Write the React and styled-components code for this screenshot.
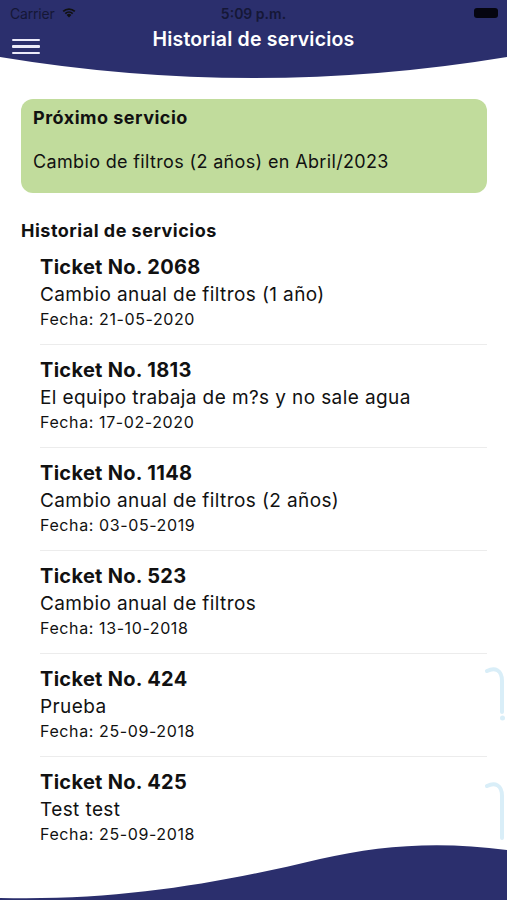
import React from 'react';
import styled, { createGlobalStyle } from 'styled-components';

const NAVY = '#2b2f6d';

const tickets = [
  { no: 2068, text: 'Cambio anual de filtros (1 año)', date: '21-05-2020' },
  { no: 1813, text: 'El equipo trabaja de m?s y no sale agua', date: '17-02-2020' },
  { no: 1148, text: 'Cambio anual de filtros (2 años)', date: '03-05-2019' },
  { no: 523, text: 'Cambio anual de filtros', date: '13-10-2018' },
  { no: 424, text: 'Prueba', date: '25-09-2018' },
  { no: 425, text: 'Test test', date: '25-09-2018' },
];

const App = () => {
  return (
    <>
      <GlobalStyle />
      <StyledPage>
        <StyledHeader>
          <StyledStatusBar>
            <StyledCarrier>
              Carrier
              <svg width="16" height="12" viewBox="0 0 16 12">
                <path d="M8 11.5 L5.6 8.9 A3.4 3.4 0 0 1 10.4 8.9 Z" fill="#111" />
                <path d="M3.7 7 A6.2 6.2 0 0 1 12.3 7 L11.1 8.3 A4.5 4.5 0 0 0 4.9 8.3 Z" fill="#111" />
                <path d="M1.6 4.8 A9.2 9.2 0 0 1 14.4 4.8 L13.2 6.1 A7.5 7.5 0 0 0 2.8 6.1 Z" fill="#111" />
              </svg>
            </StyledCarrier>
            <StyledTime>5:09 p.m.</StyledTime>
            <StyledBattery />
          </StyledStatusBar>
          <StyledNav>
            <StyledBurger>
              <span />
              <span />
              <span />
            </StyledBurger>
            <StyledTitle>Historial de servicios</StyledTitle>
          </StyledNav>
        </StyledHeader>
        <StyledCurve viewBox="0 0 507 21" preserveAspectRatio="none">
          <path d="M0 0 H507 V0 Q253.5 42 0 0 Z" fill={NAVY} />
        </StyledCurve>

        <StyledContent>
          <StyledNextCard>
            <StyledCardTitle>Próximo servicio</StyledCardTitle>
            <StyledCardText>Cambio de filtros (2 años) en Abril/2023</StyledCardText>
          </StyledNextCard>

          <StyledSection>Historial de servicios</StyledSection>

          <StyledList>
            {tickets.map(t => (
              <StyledRow key={t.no}>
                <StyledTicket>Ticket No. {t.no}</StyledTicket>
                <StyledDesc>{t.text}</StyledDesc>
                <StyledDate>Fecha: {t.date}</StyledDate>
              </StyledRow>
            ))}
          </StyledList>
        </StyledContent>

        {/* faint water-drop watermark peeking in from the right edge */}
        <StyledDrops width="22" height="180" viewBox="0 0 22 180">
          <path d="M2 7 C10 3 17 6 17 17 L17 48" />
          <circle cx="17.5" cy="54" r="2.5" />
          <path d="M2 122 C10 118 17 121 17 132 L17 174" />
        </StyledDrops>

        <StyledFooter viewBox="0 0 507 57" preserveAspectRatio="none">
          <path
            d="M0 55 C120 58 220 40 320 16 C380 2 440 -2 507 7 V57 H0 Z"
            fill={NAVY}
          />
        </StyledFooter>
      </StyledPage>
    </>
  );
};

export default App;

const GlobalStyle = createGlobalStyle`
  * {
    box-sizing: border-box;
  }

  body {
    margin: 0;
    background: #fff;
    font-family: Inter, 'Liberation Sans', sans-serif;
    color: #111;
  }
`;

const StyledPage = styled.div`
  position: relative;
  display: flex;
  flex-direction: column;
  min-height: 100vh;
  overflow: hidden;
`;

const StyledHeader = styled.header`
  height: 57px;
  background: ${NAVY};
`;

const StyledStatusBar = styled.div`
  position: relative;
  display: flex;
  align-items: center;
  justify-content: space-between;
  height: 26px;
  padding: 0 9px 0 10px;
  font-size: 14px;
  color: #151736;
`;

const StyledCarrier = styled.span`
  display: flex;
  align-items: center;
  gap: 6px;
  letter-spacing: -0.2px;

  svg {
    margin-top: -2px;
  }
`;

const StyledTime = styled.span`
  position: absolute;
  left: 0;
  right: 0;
  text-align: center;
  font-weight: 600;
  pointer-events: none;
`;

const StyledBattery = styled.span`
  width: 24px;
  height: 10px;
  margin-top: -1px;
  border-radius: 3px;
  background: #050510;
`;

const StyledNav = styled.div`
  position: relative;
  display: flex;
  align-items: center;
  height: 31px;
  padding-left: 12px;
`;

const StyledBurger = styled.div`
  display: flex;
  flex-direction: column;
  gap: 4px;
  margin-top: 10px;

  span {
    display: block;
    width: 28px;
    height: 2.6px;
    border-radius: 1px;
    background: #ecebfa;
  }
`;

const StyledTitle = styled.h1`
  position: absolute;
  left: 0;
  right: 0;
  top: 0;
  margin: 0;
  text-align: center;
  font-size: 19.5px;
  line-height: 26px;
  font-weight: 600;
  letter-spacing: 0.2px;
  color: #fff;
`;

const StyledCurve = styled.svg`
  display: block;
  width: 100%;
  height: 21px;
`;

const StyledContent = styled.main`
  flex: 1;
  padding: 21px 20px 0 21px;
`;

const StyledNextCard = styled.section`
  padding: 7px 12px 19px;
  border-radius: 12px;
  background: #c1dc9c;
`;

const StyledCardTitle = styled.h2`
  margin: 0;
  font-size: 18px;
  line-height: 24px;
  font-weight: 700;
  letter-spacing: 0.5px;
`;

const StyledCardText = styled.p`
  margin: 20px 0 0;
  font-size: 18px;
  line-height: 24px;
  letter-spacing: 0.35px;
`;

const StyledSection = styled.h3`
  margin: 27px 0 0;
  font-size: 18px;
  line-height: 22px;
  font-weight: 700;
  letter-spacing: 0.5px;
`;

const StyledList = styled.ul`
  margin: 0 0 0 19px;
  padding: 0;
  list-style: none;
`;

const StyledRow = styled.li`
  padding: 12px 0 16px;
  border-bottom: 1px solid #ececec;

  &:last-child {
    padding-bottom: 0;
    border-bottom: none;
  }
`;

const StyledTicket = styled.p`
  margin: 0;
  font-size: 20px;
  line-height: 26px;
  font-weight: 700;
  letter-spacing: 0.3px;
`;

const StyledDesc = styled.p`
  margin: 0;
  font-size: 19px;
  line-height: 30px;
  letter-spacing: 0.4px;
`;

const StyledDate = styled.p`
  margin: 0;
  font-size: 16px;
  line-height: 18px;
  letter-spacing: 0.6px;
`;

const StyledDrops = styled.svg`
  position: absolute;
  right: 0;
  top: 664px;
  fill: none;
  stroke: #d9eef8;
  stroke-width: 4;
  stroke-linecap: round;

  circle {
    fill: #d9eef8;
    stroke: none;
  }
`;

const StyledFooter = styled.svg`
  display: block;
  width: 100%;
  height: 57px;
`;
